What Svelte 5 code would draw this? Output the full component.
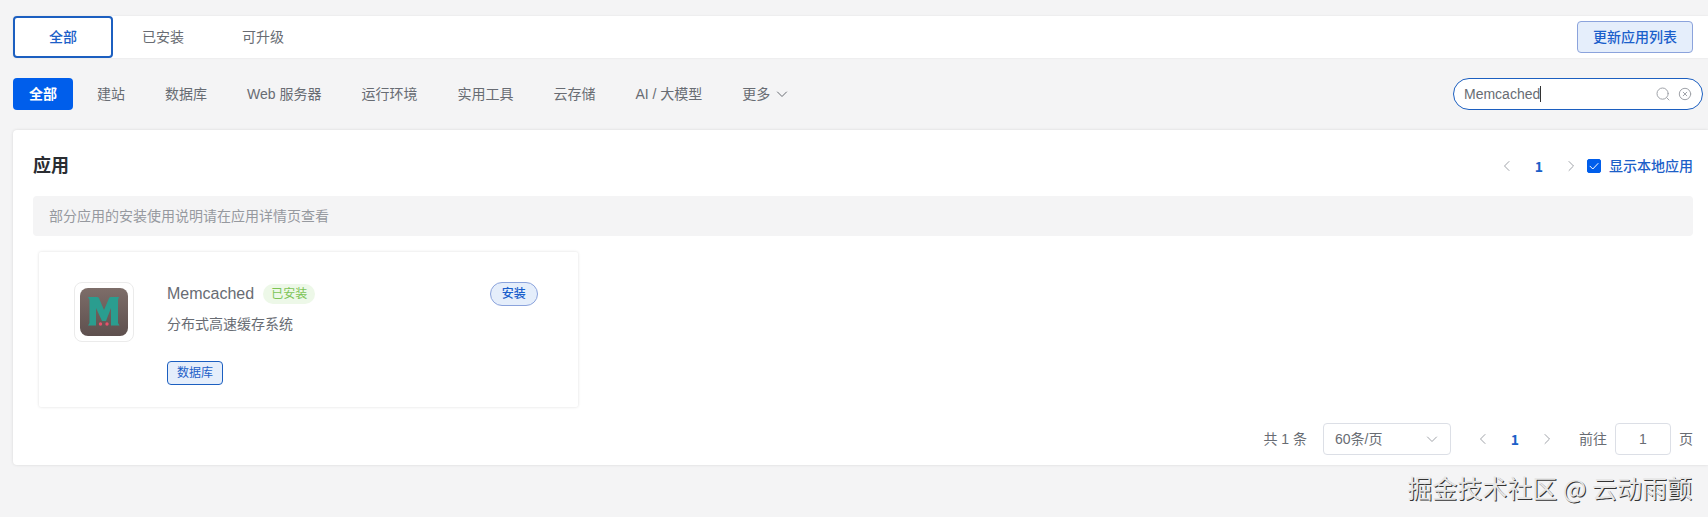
<script>
    const tabs = ['全部', '已安装', '可升级'];
    const categories = ['全部', '建站', '数据库', 'Web 服务器', '运行环境', '实用工具', '云存储', 'AI / 大模型'];
    const apps = [{ name: 'Memcached', status: '已安装', desc: '分布式高速缓存系统', tags: ['数据库'] }];

    let activeTab = '全部';
    let activeCategory = '全部';
    let keyword = 'Memcached';
    let showLocal = true;
    let pageSize = '60';
    let jumpTo = '1';
</script>

<div class="page">
    <nav class="tabs">
        {#each tabs as tab}
            <button class="tab" class:active={tab === activeTab} on:click={() => (activeTab = tab)}>{tab}</button>
        {/each}
        <button class="plain sync">更新应用列表</button>
    </nav>

    <div class="filters">
        {#each categories as item}
            <button class="category" class:active={item === activeCategory} on:click={() => (activeCategory = item)}>{item}</button>
        {/each}
        <button class="category more">
            更多
            <svg width="14" height="14" viewBox="0 0 14 14"><path d="M2.500 5L7 9.500 11.500 5" /></svg>
        </button>
        <div class="search">
            <input type="text" aria-label="搜索" bind:value={keyword} />
            <span class="caret"></span>
            <button aria-label="搜索应用">
                <svg width="14" height="14" viewBox="0 0 14 14"><circle cx="6.6" cy="6.6" r="5.6" /><path d="M10.7 10.7l2.3 2.3" /></svg>
            </button>
            <button aria-label="清空" on:click={() => (keyword = '')}>
                <svg width="14" height="14" viewBox="0 0 14 14"><circle cx="7" cy="7" r="5.7" /><path d="M5.2 5.2l3.6 3.6M8.800 5.2L5.2 8.8" /></svg>
            </button>
        </div>
    </div>

    <main class="panel">
        <header class="head">
            <h1>应用</h1>
            <div class="pager">
                <button aria-label="上一页"><svg width="12" height="12" viewBox="0 0 12 12"><path d="M8 1.5L3.5 6 8 10.5" /></svg></button>
                <button class="current">1</button>
                <button aria-label="下一页"><svg width="12" height="12" viewBox="0 0 12 12"><path d="M4 1.5L8.5 6 4 10.5" /></svg></button>
            </div>
            <label class="local">
                <span class="check">
                    <input type="checkbox" bind:checked={showLocal} />
                    <svg width="14" height="14" viewBox="0 0 14 14"><path d="M3 7.2l2.800 2.800L11 4.500" /></svg>
                </span>
                显示本地应用
            </label>
        </header>

        <p class="notice">部分应用的安装使用说明请在应用详情页查看</p>

        <div class="apps">
            {#each apps as app}
                <article class="app">
                    <div class="logo">
                        <svg width="48" height="48" viewBox="0 0 48 48">
                            <defs>
                                <linearGradient id="logo-bg" x1="0" y1="0" x2="0" y2="1">
                                    <stop offset="0" stop-color="#7d6d69" />
                                    <stop offset="1" stop-color="#5e504e" />
                                </linearGradient>
                            </defs>
                            <rect width="48" height="48" rx="8" fill="url(#logo-bg)" />
                            <path
                                fill="#2a9d8f"
                                d="M8 9h9q1.500 0 2 1.300L24 22l5-11.700q.5-1.300 2-1.300h8l-1 3v23l1.500 2.500H31V20l-5 13h-4L16 20v17.500H8L9.500 35V12z"
                            />
                            <circle cx="20.5" cy="36" r="1.700" fill="#e8506c" />
                            <circle cx="27" cy="36" r="1.700" fill="#e8506c" />
                        </svg>
                    </div>
                    <div class="info">
                        <div class="title">
                            <h2>{app.name}</h2>
                            <span class="status">{app.status}</span>
                            <button class="plain install">安装</button>
                        </div>
                        <p class="desc">{app.desc}</p>
                        <div class="tags">
                            {#each app.tags as tag}
                                <span class="tag">{tag}</span>
                            {/each}
                        </div>
                    </div>
                </article>
            {/each}
        </div>

        <footer class="foot">
            <span>共 {apps.length} 条</span>
            <div class="size">
                <select aria-label="每页条数" bind:value={pageSize}>
                    <option value="20">20条/页</option>
                    <option value="60">60条/页</option>
                    <option value="100">100条/页</option>
                </select>
                <svg width="14" height="14" viewBox="0 0 14 14"><path d="M2.500 5L7 9.500 11.500 5" /></svg>
            </div>
            <div class="pager">
                <button aria-label="上一页"><svg width="12" height="12" viewBox="0 0 12 12"><path d="M8 1.5L3.5 6 8 10.5" /></svg></button>
                <button class="current">1</button>
                <button aria-label="下一页"><svg width="12" height="12" viewBox="0 0 12 12"><path d="M4 1.5L8.5 6 4 10.5" /></svg></button>
            </div>
            <label class="jump">
                前往
                <input type="text" bind:value={jumpTo} />
                页
            </label>
        </footer>
    </main>

    <div class="watermark">掘金技术社区 @ 云动雨颤</div>
</div>

<style>
    :global(body) {
        background: #f4f4f5;
    }

    .page {
        padding: 16px 0 0 13px;
        font-family: 'Liberation Sans', 'Noto Sans CJK SC', sans-serif;
        font-size: 14px;
        line-height: 20px;
        color: #686c73;
    }

    .page * {
        box-sizing: border-box;
    }

    button,
    input,
    select {
        margin: 0;
        padding: 0;
        border: 0;
        background: none;
        font: inherit;
        color: inherit;
        outline: none;
    }

    button {
        cursor: pointer;
    }

    h1,
    h2,
    p {
        margin: 0;
    }

    svg {
        display: block;
        flex: none;
    }

    svg path,
    svg circle {
        stroke-linecap: round;
        stroke-linejoin: round;
    }

    .tabs {
        display: flex;
        align-items: center;
        height: 42px;
        padding-right: 15px;
        background: #fff;
        border-radius: 4px 0 0 4px;
        box-shadow: 0 0 2px rgba(0, 0, 0, 0.1);
    }

    .tab {
        width: 100px;
        height: 42px;
        border-radius: 4px;
    }

    .tab.active {
        border: 2px solid #1c5fc0;
        color: #1c60c8;
        font-weight: 500;
    }

    .plain {
        border: 1px solid #8ba3dc;
        background: #e5eefb;
        color: #1a5fcb;
        font-weight: 500;
    }

    .sync {
        height: 32px;
        margin-left: auto;
        padding: 0 15px;
        border-radius: 4px;
    }

    .filters {
        display: flex;
        align-items: center;
        gap: 8px;
        padding: 20px 5px 20px 0;
    }

    .category {
        height: 32px;
        padding: 0 16px;
        border-radius: 4px;
        white-space: nowrap;
    }

    .category.active {
        background: #005eeb;
        color: #fff;
        font-weight: 700;
    }

    .more {
        display: flex;
        align-items: center;
        gap: 5px;
    }

    .filters svg,
    .pager svg,
    .size svg {
        fill: none;
        stroke: currentColor;
    }

    .search {
        position: relative;
        display: flex;
        align-items: center;
        gap: 8px;
        width: 250px;
        height: 32px;
        margin-left: auto;
        padding: 0 10px;
        border: 1px solid #1c5fc0;
        border-radius: 16px;
        background: #fff;
    }

    .search input {
        flex: 1;
        min-width: 0;
        height: 30px;
    }

    .search button {
        color: #a0a3a9;
    }

    .caret {
        position: absolute;
        left: 86px;
        top: 7px;
        width: 1px;
        height: 16px;
        background: #333;
    }

    .panel {
        padding: 20px 15px 10px 20px;
        background: #fff;
        border-radius: 4px 0 0 4px;
        box-shadow: 0 0 3px rgba(0, 0, 0, 0.12);
    }

    .head {
        display: flex;
        align-items: center;
        height: 32px;
    }

    h1 {
        margin-right: auto;
        font-size: 18px;
        line-height: 24px;
        color: #2a2d32;
    }

    .pager {
        display: flex;
    }

    .pager button {
        display: flex;
        align-items: center;
        justify-content: center;
        width: 32px;
        height: 32px;
        color: #a0a3a9;
    }

    .pager .current {
        color: #1c60c8;
        font-family: 'Noto Sans CJK SC', sans-serif;
        font-weight: 700;
    }

    .local {
        display: flex;
        align-items: center;
        gap: 8px;
        color: #1c60c8;
        font-weight: 500;
    }

    .check {
        position: relative;
    }

    .check input {
        appearance: none;
        display: block;
        width: 14px;
        height: 14px;
        border: 1px solid #dcdfe6;
        border-radius: 2px;
    }

    .check input:checked {
        border-color: #005eeb;
        background: #005eeb;
    }

    /* tick drawn over the box */
    .check svg {
        position: absolute;
        inset: 0;
        fill: none;
        stroke: #fff;
        pointer-events: none;
    }

    .notice {
        margin-top: 14px;
        padding: 10px 16px;
        border-radius: 4px;
        background: #f4f4f5;
        color: #96999f;
    }

    .apps {
        display: grid;
        grid-template-columns: repeat(3, 1fr);
        gap: 16px;
        padding: 16px 6px;
    }

    .app {
        display: flex;
        gap: 33px;
        padding: 30px 40px 22px 35px;
        border-radius: 2px;
        box-shadow: 0 0 3px rgba(0, 0, 0, 0.14);
    }

    .logo {
        display: flex;
        align-items: center;
        justify-content: center;
        flex: none;
        width: 60px;
        height: 60px;
        border: 1px solid #ebebeb;
        border-radius: 8px;
    }

    .info {
        flex: 1;
    }

    .title {
        display: flex;
        align-items: center;
        height: 24px;
    }

    h2 {
        font-size: 16px;
        font-weight: 400;
    }

    .status {
        margin-left: 9px;
        padding: 0 8px;
        border-radius: 10px;
        background: #edf8e8;
        color: #7cc455;
        font-size: 12px;
    }

    .install {
        height: 24px;
        margin-left: auto;
        padding: 0 11px;
        border-radius: 12px;
        font-size: 12px;
    }

    .desc {
        margin-top: 8px;
    }

    .tags {
        display: flex;
        gap: 8px;
        margin-top: 27px;
    }

    .tag {
        height: 24px;
        padding: 0 9px;
        border: 1px solid #1c5fc0;
        border-radius: 4px;
        background: #e5eefb;
        color: #1c60c8;
        font-size: 12px;
        line-height: 22px;
    }

    .foot {
        display: flex;
        align-items: center;
        justify-content: flex-end;
        gap: 16px;
    }

    .size {
        position: relative;
        width: 128px;
        border: 1px solid #dcdfe6;
        border-radius: 4px;
    }

    .size select {
        appearance: none;
        display: block;
        width: 100%;
        height: 30px;
        padding: 0 11px;
    }

    .size svg {
        position: absolute;
        right: 11px;
        top: 8px;
        color: #a0a3a9;
        pointer-events: none;
    }

    .jump {
        display: flex;
        align-items: center;
        gap: 8px;
    }

    .jump input {
        width: 56px;
        height: 32px;
        border: 1px solid #dcdfe6;
        border-radius: 4px;
        text-align: center;
    }

    .watermark {
        padding: 4px 16px 0 0;
        color: #e6e6e6;
        font-family: 'Noto Sans CJK SC', sans-serif;
        font-size: 25px;
        line-height: 36px;
        text-align: right;
        text-shadow: 1px 1px 0 #333;
    }
</style>
